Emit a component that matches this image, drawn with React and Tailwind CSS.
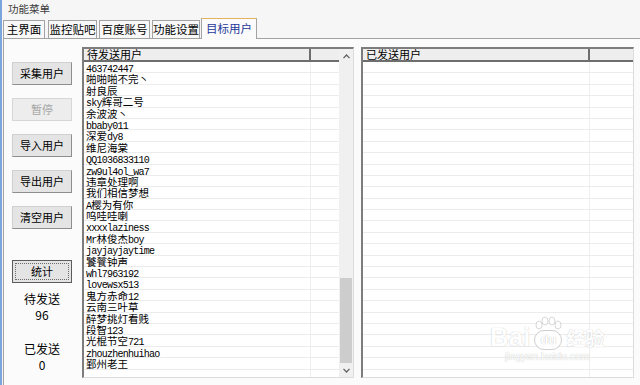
const users = [
  "463742447",
  "啪啪啪不完丶",
  "射良辰",
  "sky辉哥二号",
  "余波波丶",
  "bbaby011",
  "深爱dy8",
  "维尼海棠",
  "QQ1036833110",
  "zw9ul4ol_wa7",
  "违章处理啊",
  "我们相信梦想",
  "A樱为有你",
  "呜哇哇喇",
  "xxxxlaziness",
  "Mr林俊杰boy",
  "jayjayjaytime",
  "饕餮钟声",
  "whl7963192",
  "lovewsx513",
  "鬼方赤命12",
  "云南三叶草",
  "醉梦挑灯看贱",
  "段智123",
  "光棍节空721",
  "zhouzhenhuihao",
  "鄞州老王",
];

const cjk = { fontFamily: '"Noto Sans CJK SC", "Noto Sans", sans-serif' };
const mono = { fontFamily: '"Liberation Mono", "DejaVu Sans Mono", monospace' };

// latin runs look like SimSun's half-width glyphs, cjk runs full width
function Name({ text }) {
  const parts = text.match(/[\x00-\x7f]+|[^\x00-\x7f]+/g) || [];
  return parts.map((p, i) =>
    /^[\x00-\x7f]/.test(p) ? (
      <span key={i} style={mono} className="text-[10px] leading-none tracking-[-0.75px] text-black">
        {p}
      </span>
    ) : (
      <span key={i} style={cjk} className="text-[10.5px] leading-none text-black">
        {p}
      </span>
    )
  );
}

function Row({ children }) {
  return (
    <div className="flex h-[11.4px] shrink-0 border-b border-[#ececec]">
      <div className="w-[227px] shrink-0 border-r border-[#efefef] pl-[2px] pt-[1px] text-[10px] leading-[10px] whitespace-nowrap">
        {children}
      </div>
      <div className="flex-1" />
    </div>
  );
}

function ListBox({ title, items, scroll }) {
  const rows = [...items, ...Array(30 - items.length).fill(null)];
  return (
    <div className="h-[331px] flex border-t-2 border-l-2 border-[#7d7d7d] border-r border-b border-r-[#dcdcdc] border-b-[#dcdcdc] bg-white overflow-hidden">
      <div className="flex-1 flex flex-col min-w-0">
        <div className="flex h-[13px] shrink-0 bg-[#eeeeee] border-b-2 border-[#6e6e6e]">
          <div
            style={cjk}
            className="w-[227px] shrink-0 border-r-2 border-[#6e6e6e] pl-[3px] text-[11px] leading-[11px] text-black"
          >
            {title}
          </div>
          <div className="flex-1" />
        </div>
        {rows.map((u, i) => (
          <Row key={i}>{u && <Name text={u} />}</Row>
        ))}
      </div>
      {scroll && (
        <div className="w-[14px] shrink-0 flex flex-col bg-[#f0f0f0]">
          <div className="h-[14px] flex items-center justify-center">
            <svg width="7" height="5" viewBox="0 0 7 5">
              <path d="M0.5 4.2 L3.5 1 L6.5 4.2" fill="none" stroke="#606060" strokeWidth="1.2" />
            </svg>
          </div>
          <div className="flex-1" />
          <div className="h-[85px] mx-[1px] bg-[#cdcdcd]" />
          <div className="h-[14px] flex items-center justify-center">
            <svg width="7" height="5" viewBox="0 0 7 5">
              <path d="M0.5 0.8 L3.5 4 L6.5 0.8" fill="none" stroke="#606060" strokeWidth="1.2" />
            </svg>
          </div>
        </div>
      )}
    </div>
  );
}

function Btn({ children, disabled, focused }) {
  if (focused) {
    return (
      <div className="h-[23px] w-[60px] border border-[#5c5c5c] bg-[#e4e4e4] p-[2px]">
        <div
          style={cjk}
          className="h-full border border-dotted border-[#6a6a6a] flex items-center justify-center text-[11px] text-black"
        >
          {children}
        </div>
      </div>
    );
  }
  return (
    <div
      style={cjk}
      className={`h-[23px] w-[60px] flex items-center justify-center text-[11px] border ${
        disabled
          ? "bg-[#ededed] border-[#d6d6d6] text-[#a6a6a6]"
          : "bg-[#e4e4e4] border-[#d0d0d0] border-r-[#8e8e8e] border-b-[#8e8e8e] text-black"
      }`}
    >
      {children}
    </div>
  );
}

function Tab({ children, className, selected }) {
  return (
    <div
      style={cjk}
      className={`shrink-0 flex items-center justify-center text-[11.5px] border-t border-l border-r border-[#a3a3a3] ${
        selected
          ? "relative z-10 h-[21px] -mb-px bg-[#fbfbfb] text-[#26389a] border-t-[#e3b25a]"
          : "h-[18px] bg-[#f8f8f8] text-black"
      } ${className}`}
    >
      {children}
    </div>
  );
}

export default function App() {
  return (
    <div className="w-[640px] h-[385px] overflow-hidden relative bg-[#f6f6f6] border-l-2 border-[#7ba6dc] flex flex-col">
      <div style={cjk} className="h-[18px] pl-[6px] pt-[3px] text-[10.5px] leading-[12px] text-[#3a3a3a]">
        功能菜单
      </div>

      <div className="h-[20px] ml-px flex items-end">
        <Tab className="w-[42px]">主界面</Tab>
        <Tab className="w-[49px] ml-[3px]">监控贴吧</Tab>
        <Tab className="w-[51px] ml-[2px]">百度账号</Tab>
        <Tab className="w-[48px] ml-[2px]">功能设置</Tab>
        <Tab className="w-[56px] ml-px" selected>
          目标用户
        </Tab>
      </div>

      <div className="flex-1 ml-px flex border-t border-l border-[#a3a3a3] bg-[#fbfbfb]">
        <div className="w-[78px] shrink-0 flex flex-col pl-[8px] pt-[23px]">
          <div className="flex flex-col gap-[13px]">
            <Btn>采集用户</Btn>
            <Btn disabled>暂停</Btn>
            <Btn>导入用户</Btn>
            <Btn>导出用户</Btn>
            <Btn>清空用户</Btn>
          </div>
          <div className="mt-[31px]">
            <Btn focused>统计</Btn>
          </div>
          <div style={cjk} className="w-[60px] mt-[8px] flex flex-col items-center text-[12px] leading-[16px] text-black">
            <div>待发送</div>
            <div>96</div>
            <div className="mt-[18px]">已发送</div>
            <div>0</div>
          </div>
        </div>

        <div className="flex-1 flex gap-[7px] pt-[8px] pr-[6px]">
          <div className="w-[272px] shrink-0">
            <ListBox title="待发送用户" items={users} scroll />
          </div>
          <div className="flex-1">
            <ListBox title="已发送用户" items={[]} />
          </div>
        </div>
      </div>

      {/* baidu watermark */}
      <div className="absolute left-[488px] top-[316px] flex flex-col items-center pointer-events-none opacity-80">
        <div className="flex items-end gap-[3px]">
          <span
            style={{ fontFamily: '"Liberation Sans", sans-serif' }}
            className="text-[26px] leading-[26px] font-bold text-white [text-shadow:0_0_1px_#a9a9a9]"
          >
            Bai
          </span>
          <div className="flex flex-col items-center">
            <svg width="30" height="14" viewBox="0 0 30 14">
              <ellipse cx="6" cy="9" rx="3" ry="4" fill="white" stroke="#c4c4c4" strokeWidth="0.8" />
              <ellipse cx="12" cy="5" rx="3" ry="4" fill="white" stroke="#c4c4c4" strokeWidth="0.8" />
              <ellipse cx="19" cy="5" rx="3" ry="4" fill="white" stroke="#c4c4c4" strokeWidth="0.8" />
              <ellipse cx="25" cy="9" rx="3" ry="4" fill="white" stroke="#c4c4c4" strokeWidth="0.8" />
            </svg>
            <div
              style={{ fontFamily: '"Liberation Sans", sans-serif' }}
              className="h-[20px] w-[28px] rounded-full border border-[#c4c4c4] bg-white flex items-center justify-center text-[13px] font-bold text-white [text-shadow:0_0_1px_#9c9c9c]"
            >
              du
            </div>
          </div>
          <span style={cjk} className="text-[19px] leading-[24px] font-bold text-white [text-shadow:0_0_1px_#a9a9a9]">
            经验
          </span>
        </div>
        <span
          style={{ fontFamily: '"Liberation Sans", sans-serif' }}
          className="text-[10.5px] leading-[12px] text-white [text-shadow:0_0_1px_#a9a9a9]"
        >
          jingyan.baidu.com
        </span>
      </div>
    </div>
  );
}
